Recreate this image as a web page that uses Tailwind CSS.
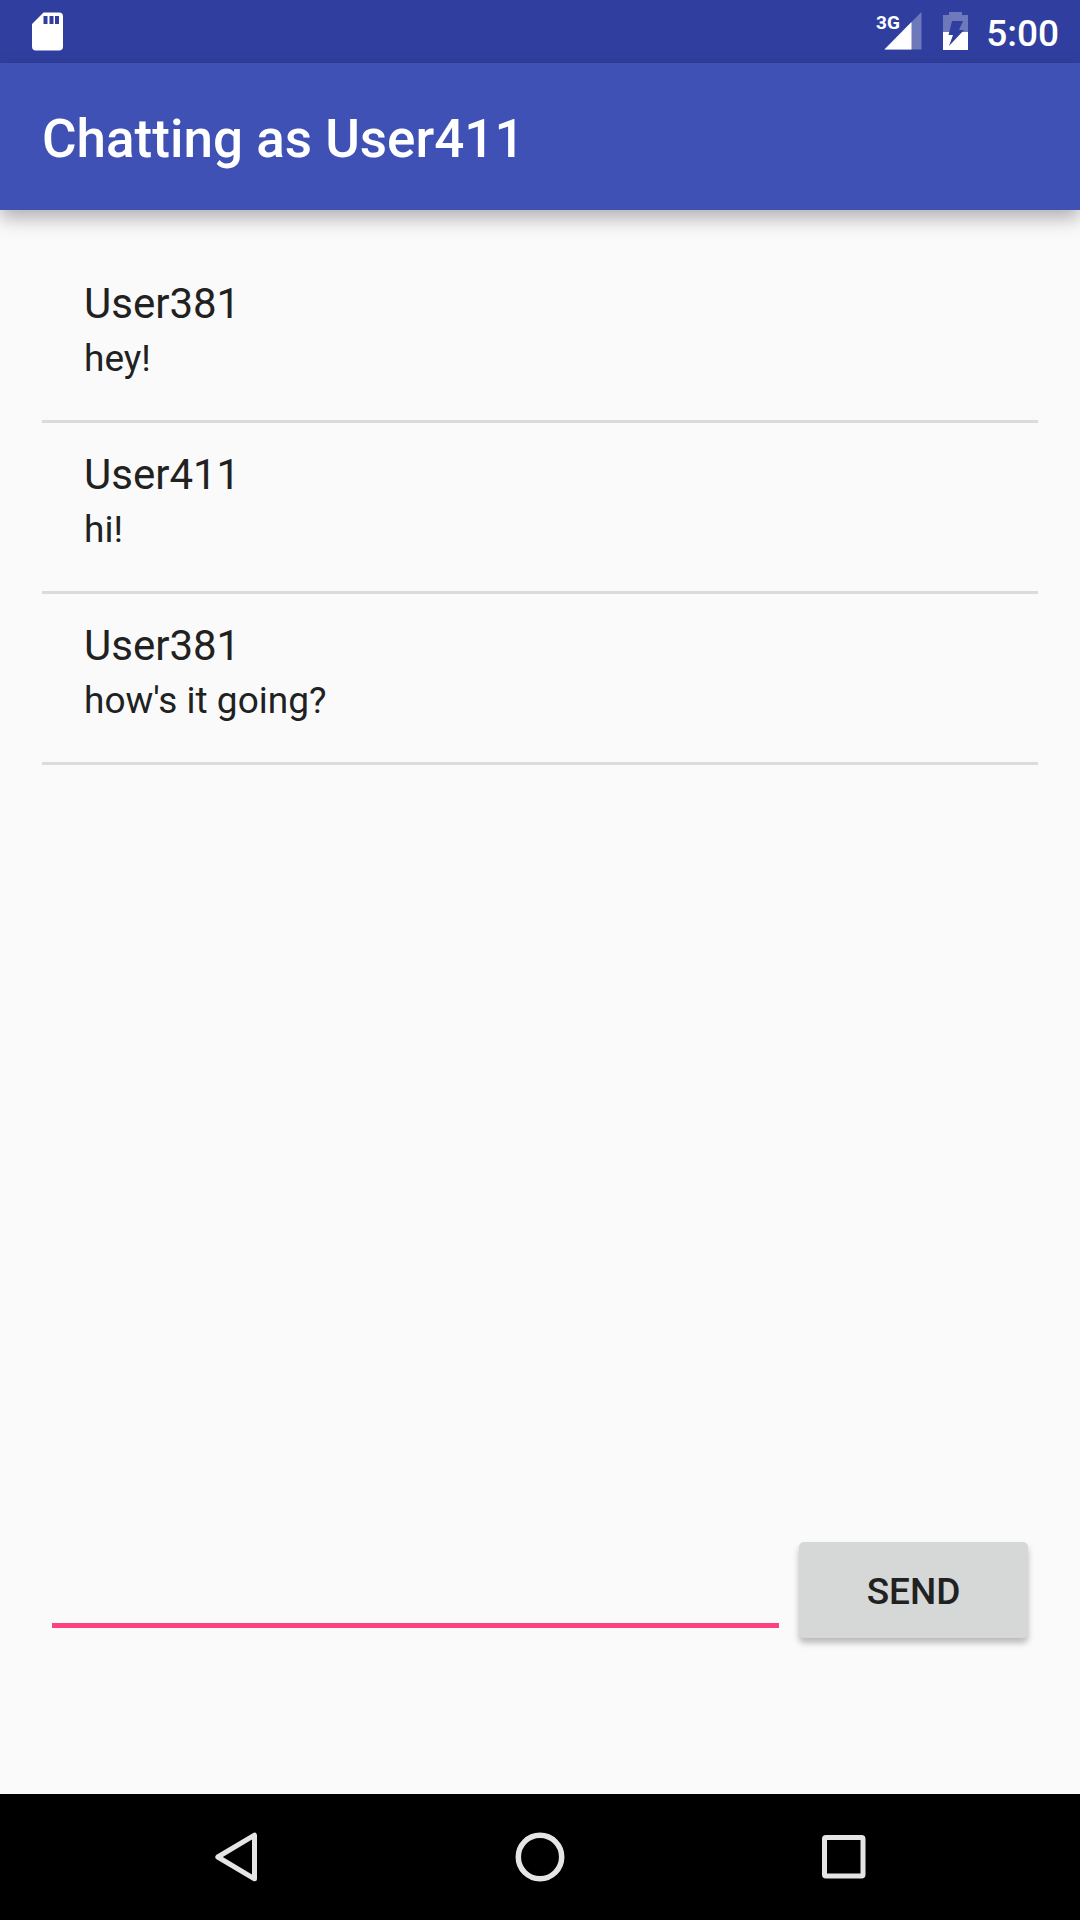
<!DOCTYPE html>
<html lang="en">
<head>
<meta charset="utf-8">
<meta name="viewport" content="width=device-width, initial-scale=1">
<title>Chat</title>
<script src="https://cdn.jsdelivr.net/npm/@tailwindcss/browser@4"></script>
</head>
<body class="flex min-h-screen flex-col bg-[#fafafa] font-['Roboto',sans-serif] text-[#212121]">
  <div class="flex h-[63px] items-center bg-[#303f9f] pr-[21px] pl-8 text-white">
    <svg class="h-[39px] w-[31px]" viewBox="0 0 31 39" fill="currentColor" role="img" aria-label="SD card">
      <path fill-rule="evenodd" d="M11.500 0.500H27a4 4 0 0 1 4 4V34.500a4 4 0 0 1-4 4H4a4 4 0 0 1-4-4V12ZM11.500 4v8h4V4ZM17.500 4v8h4V4ZM23 4v8h4V4Z"/>
    </svg>
    <svg class="ml-auto h-[39px] w-[46px] overflow-visible" viewBox="0 0 46 39" fill="currentColor" role="img" aria-label="3G signal">
      <path opacity=".3" d="M45.500 0V37.500H8Z"/>
      <path d="M35.500 10V37.500H8.500Z"/>
      <text x="0" y="17" font-size="19" font-weight="700">3G</text>
    </svg>
    <svg class="ml-[21px] h-[39px] w-[25px]" viewBox="0 0 25 39" role="img" aria-label="Battery charging">
      <path fill="#fff" fill-opacity=".3" d="M6 0H19V3H25V20H0V3H6Z"/>
      <path fill="#fff" d="M0 20H25V38H0Z"/>
      <path fill="#303f9f" d="M9 9H20L16 18H21L6 34L10 23H5.500Z"/>
    </svg>
    <time class="ml-[18px] pt-1 text-[37px] leading-[44px] font-medium">5:00</time>
  </div>
  <header class="flex h-[147px] items-center bg-[#3f51b5] px-[42px] pt-1 shadow-[0_8px_18px_rgba(0,0,0,0.3)]">
    <h1 class="text-[53px] leading-[62px] font-medium text-white">Chatting as User411</h1>
  </header>
  <main class="flex flex-1 flex-col px-[42px] pt-[42px] pb-[156px]">
    <ul class="flex-1">
      <li class="flex h-[171px] flex-col gap-2 border-b-3 border-[#dbdbdb] px-[42px] pt-[26px]">
        <p class="text-[42px] leading-[51px]">User381</p>
        <p class="text-[37px] leading-[43px]">hey!</p>
      </li>
      <li class="flex h-[171px] flex-col gap-2 border-b-3 border-[#dbdbdb] px-[42px] pt-[26px]">
        <p class="text-[42px] leading-[51px]">User411</p>
        <p class="text-[37px] leading-[43px]">hi!</p>
      </li>
      <li class="flex h-[171px] flex-col gap-2 border-b-3 border-[#dbdbdb] px-[42px] pt-[26px]">
        <p class="text-[42px] leading-[51px]">User381</p>
        <p class="text-[37px] leading-[43px]">how's it going?</p>
      </li>
    </ul>
    <form class="flex items-end gap-5 px-[10px]">
      <input type="text" aria-label="Message" class="mb-[10px] h-[86px] min-w-0 flex-1 border-b-5 border-[#ff4081] bg-transparent text-[42px] outline-none">
      <button type="button" class="h-24 w-[229px] rounded-[5px] bg-[#d6d7d7] pt-1 text-[37px] font-medium shadow-[0_5px_6px_rgba(0,0,0,0.26)]">SEND</button>
    </form>
  </main>
  <nav class="flex h-[126px] items-center bg-black px-[84px] text-[#e5e5e5]" aria-label="System">
    <button type="button" aria-label="Back" class="flex h-full flex-1 items-center justify-center">
      <svg class="size-[50px]" viewBox="0 0 50 50" fill="none" stroke="currentColor" stroke-width="5" stroke-linejoin="round"><path d="M43.500 3.200V46.800L6.800 25Z"/></svg>
    </button>
    <button type="button" aria-label="Home" class="flex h-full flex-1 items-center justify-center">
      <svg class="size-[50px]" viewBox="0 0 50 50" fill="none" stroke="currentColor" stroke-width="5.500"><circle cx="25" cy="25" r="21.700"/></svg>
    </button>
    <button type="button" aria-label="Recent apps" class="flex h-full flex-1 items-center justify-center">
      <svg class="size-[50px]" viewBox="0 0 50 50" fill="none" stroke="currentColor" stroke-width="5"><rect x="5.500" y="5.500" width="38.500" height="38.500" rx="1.500"/></svg>
    </button>
  </nav>
</body>
</html>
